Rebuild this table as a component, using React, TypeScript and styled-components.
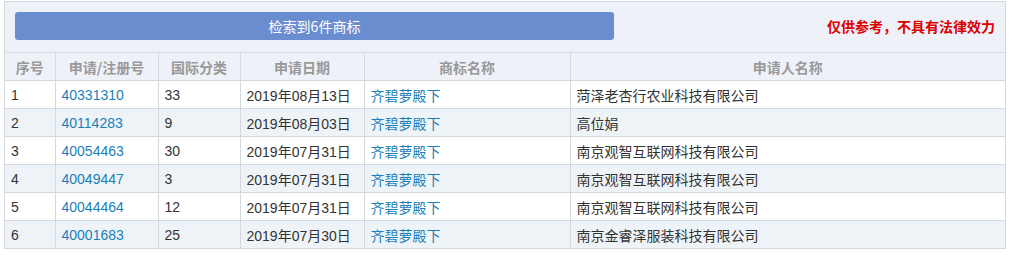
import React, { FC } from 'react'
import styled, { createGlobalStyle } from 'styled-components'

const GlobalStyle = createGlobalStyle`
  body {
    margin: 0;
    background: #fff;
    font-family: Arial, "Noto Sans CJK SC", sans-serif;
  }
`

const Wrapper = styled.div`
  box-sizing: border-box;
  width: 1002px;
  margin: 1px 0 0 4px;
  border: 1px solid #d5d9df;
`

const Toolbar = styled.div`
  height: 50px;
  box-sizing: border-box;
  padding: 10px 10px 0;
  display: flex;
  align-items: flex-start;
  justify-content: space-between;
  background: #eef2f8;
`

const CountButton = styled.div`
  width: 599px;
  height: 28px;
  border-radius: 3px;
  background: #6a8dd0;
  color: #fff;
  font-size: 14px;
  line-height: 28px;
  text-align: center;
  font-family: "Noto Sans CJK SC", sans-serif;
`

const Notice = styled.div`
  margin-top: 5px;
  color: #dd0000;
  font-weight: bold;
  font-size: 14px;
  line-height: 18px;
  font-family: "Noto Sans CJK SC", sans-serif;
`

const Table = styled.table`
  width: 100%;
  border-collapse: collapse;
  table-layout: fixed;
  font-size: 14px;
  font-family: Arial, "Noto Sans CJK SC", sans-serif;
`

const Th = styled.th`
  height: 27px;
  padding: 0;
  border-top: 1px solid #d5d9df;
  border-left: 1px solid #d5d9df;
  background: #eef2f8;
  color: #999;
  font-weight: bold;
  text-align: center;
  font-family: "Noto Sans CJK SC", sans-serif;

  &:first-child {
    border-left: none;
  }
`

const Row = styled.tr<{ $striped: boolean }>`
  background: ${({ $striped }) => ($striped ? '#eef3f8' : '#fff')};
`

const Td = styled.td`
  height: 27px;
  padding: 0 0 0 6px;
  border-top: 1px solid #d5d9df;
  border-left: 1px solid #d5d9df;
  color: #333;
  white-space: nowrap;
  overflow: hidden;

  &:first-child {
    border-left: none;
  }
`

const Link = styled.a`
  color: #1a7fb8;
  text-decoration: none;
  cursor: pointer;
`

const columns = [
  { title: '序号', width: 50 },
  { title: '申请/注册号', width: 103 },
  { title: '国际分类', width: 82 },
  { title: '申请日期', width: 124 },
  { title: '商标名称', width: 206 },
  { title: '申请人名称', width: 435 }
]

const rows = [
  { no: '40331310', cls: '33', date: '2019年08月13日', owner: '菏泽老杏行农业科技有限公司' },
  { no: '40114283', cls: '9', date: '2019年08月03日', owner: '高位娟' },
  { no: '40054463', cls: '30', date: '2019年07月31日', owner: '南京观智互联网科技有限公司' },
  { no: '40049447', cls: '3', date: '2019年07月31日', owner: '南京观智互联网科技有限公司' },
  { no: '40044464', cls: '12', date: '2019年07月31日', owner: '南京观智互联网科技有限公司' },
  { no: '40001683', cls: '25', date: '2019年07月30日', owner: '南京金睿泽服装科技有限公司' }
]

const App: FC = () => (
  <>
    <GlobalStyle />
    <Wrapper>
      <Toolbar>
        <CountButton>检索到6件商标</CountButton>
        <Notice>仅供参考，不具有法律效力</Notice>
      </Toolbar>
      <Table>
        <colgroup>
          {columns.map(({ title, width }) => (
            <col key={title} style={{ width }} />
          ))}
        </colgroup>
        <thead>
          <tr>
            {columns.map(({ title }) => (
              <Th key={title}>{title}</Th>
            ))}
          </tr>
        </thead>
        <tbody>
          {rows.map((r, i) => (
            <Row key={r.no} $striped={i % 2 === 1}>
              <Td>{i + 1}</Td>
              <Td>
                <Link>{r.no}</Link>
              </Td>
              <Td>{r.cls}</Td>
              <Td>{r.date}</Td>
              <Td>
                <Link>齐碧萝殿下</Link>
              </Td>
              <Td>{r.owner}</Td>
            </Row>
          ))}
        </tbody>
      </Table>
    </Wrapper>
  </>
)

export default App
